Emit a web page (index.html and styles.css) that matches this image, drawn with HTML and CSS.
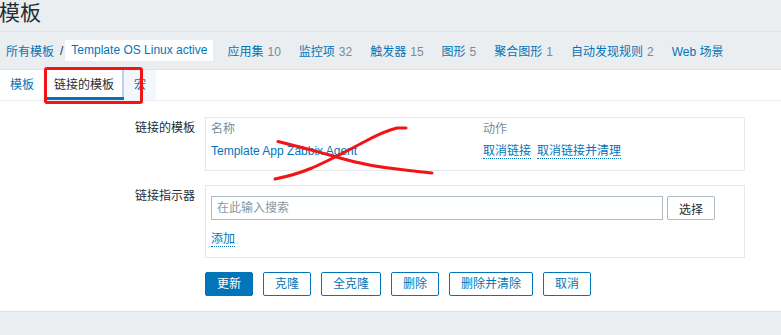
FILE: index.html
```html
<!DOCTYPE html>
<html lang="zh-CN">
<head>
<meta charset="utf-8">
<title>模板</title>
<link rel="stylesheet" href="styles.css">
</head>
<body>
<div class="page">
  <header class="top">
    <h1 class="title">模板</h1>
  </header>
  <nav class="crumbs">
    <a class="crumb-link">所有模板</a><span class="sep">/</span><span class="crumb-current">Template OS Linux active</span>
    <ul class="subnav">
      <li><a class="nav-link">应用集</a><span class="count">10</span></li>
      <li><a class="nav-link">监控项</a><span class="count">32</span></li>
      <li><a class="nav-link">触发器</a><span class="count">15</span></li>
      <li><a class="nav-link">图形</a><span class="count">5</span></li>
      <li><a class="nav-link">聚合图形</a><span class="count">1</span></li>
      <li><a class="nav-link">自动发现规则</a><span class="count">2</span></li>
      <li><a class="nav-link">Web 场景</a></li>
    </ul>
  </nav>
  <main class="content">
    <div class="tabs">
      <a class="tab">模板</a>
      <a class="tab tab-active">链接的模板</a>
      <a class="tab tab-hover">宏</a>
    </div>
    <form class="form">
      <label class="form-label">链接的模板</label>
      <div class="box linked">
        <div class="linked-head">名称</div>
        <div class="linked-head">动作</div>
        <div class="linked-cell"><a class="link">Template App Zabbix Agent</a></div>
        <div class="linked-cell actions"><a class="dotted">取消链接</a><a class="dotted">取消链接并清理</a></div>
      </div>

      <label class="form-label">链接指示器</label>
      <div class="box link-new">
        <div class="search-row">
          <input class="search-input" type="text" placeholder="在此输入搜索">
          <button class="btn-alt" type="button">选择</button>
        </div>
        <div class="add"><a class="dotted">添加</a></div>
      </div>

      <div class="buttons">
        <button class="btn btn-primary" type="button">更新</button>
        <button class="btn" type="button">克隆</button>
        <button class="btn" type="button">全克隆</button>
        <button class="btn" type="button">删除</button>
        <button class="btn" type="button">删除并清除</button>
        <button class="btn" type="button">取消</button>
      </div>
    </form>
  </main>
  <footer class="footer"></footer>

  <div class="annot-rect"></div>
  <svg class="annot-x" width="781" height="335" viewBox="0 0 781 335">
    <path d="M278 141.5 C 300 147, 320 152, 340 158 C 360 164, 385 168, 405 170 C 418 171.5, 426 172.5, 432 173" />
    <path d="M275 179 C 290 176, 300 173, 312 168 C 330 160, 345 152, 362 143 C 375 136, 388 130, 397 128 L 406 128" />
  </svg>
</div>
</body>
</html>
```

FILE: styles.css
```css
* { box-sizing: border-box; }

body {
  margin: 0;
  font: 12px "Liberation Sans", "Noto Sans CJK SC", sans-serif;
  color: #1f2c33;
  background: #fff;
}

.page {
  position: relative;
  height: 335px;
  overflow: hidden;
  display: flex;
  flex-direction: column;
}

.top {
  height: 32px;
  flex: none;
  background: #ebeef0;
  border-bottom: 1px solid #dfe4e7;
}

.title {
  margin: 0 0 0 -1px;
  font-size: 21px;
  font-weight: normal;
  line-height: 26px;
  color: #1f2c33;
}

.crumbs {
  height: 38px;
  flex: none;
  display: flex;
  align-items: center;
  padding-left: 6px;
  background: #ebeef0;
  border-bottom: 1px solid #dfe4e7;
}

.crumb-link { color: #0275b8; }

.sep {
  margin: 0 2px 0 6px;
  color: #1f2c33;
}

.crumb-current {
  height: 21px;
  line-height: 21px;
  padding: 0 6px;
  background: #fff;
  color: #0275b8;
}

.subnav {
  display: flex;
  gap: 18px;
  margin: 0 0 0 14px;
  padding: 0;
  list-style: none;
}

.nav-link { color: #0275b8; }

.count {
  margin-left: 4px;
  color: #768d99;
}

.content {
  flex: none;
  height: 241px;
}

.tabs {
  display: flex;
  height: 31px;
  border-bottom: 1px solid #ebeef0;
}

.tab {
  padding: 0 10px;
  line-height: 30px;
  color: #0275b8;
}

.tab-active {
  color: #1f2c33;
  box-shadow: inset 0 -3px 0 #0275b8, inset -2px 0 0 #b9d2ee;
}

.tab-hover {
  background: #f3f6fa;
}

.form {
  display: grid;
  grid-template-columns: 195px 540px;
  column-gap: 10px;
  row-gap: 14px;
  padding-top: 16px;
  margin: 0;
}

.form-label {
  text-align: right;
  line-height: 23px;
}

.box {
  border: 1px solid #e6e9ec;
}

.linked {
  display: grid;
  grid-template-columns: 272px auto;
  padding: 0 5px 7px;
}

.linked-head {
  line-height: 22px;
  color: #768d99;
}

.linked-cell {
  line-height: 23px;
}

.actions {
  display: flex;
  gap: 6px;
  align-items: center;
}

.link { color: #0275b8; }

.dotted {
  color: #0275b8;
  border-bottom: 1px dotted #0275b8;
  line-height: 14px;
}

.link-new {
  padding: 10px 5px 9px;
}

.search-row {
  display: flex;
  gap: 4px;
  height: 24px;
}

.search-input {
  width: 452px;
  height: 24px;
  margin: 0;
  padding: 0 5px;
  border: 1px solid #acbbc4;
  font: inherit;
  color: #1f2c33;
}

.search-input::placeholder { color: #8a969d; }

.btn-alt {
  width: 48px;
  height: 24px;
  padding: 0;
  border: 1px solid #acbbc4;
  border-radius: 2px;
  background: #fff;
  color: #1f2c33;
  font: inherit;
}

.add {
  margin-top: 10px;
  line-height: 18px;
}

.buttons {
  grid-column: 2;
  display: flex;
  gap: 10px;
}

.btn {
  height: 24px;
  padding: 0 11px;
  border: 1px solid #0275b8;
  border-radius: 2px;
  background: #fff;
  color: #0275b8;
  font: inherit;
  line-height: 22px;
}

.btn-primary {
  background: #0275b8;
  color: #fff;
}

.footer {
  flex: 1;
  background: #ebeef0;
  border-top: 1px solid #dde2e6;
}

.annot-rect {
  position: absolute;
  left: 44px;
  top: 67px;
  width: 99px;
  height: 37px;
  border: 3px solid #f21414;
  border-radius: 3px;
}

.annot-x {
  position: absolute;
  left: 0;
  top: 0;
  pointer-events: none;
}

.annot-x path {
  fill: none;
  stroke: #f21414;
  stroke-width: 3;
  stroke-linecap: round;
  stroke-linejoin: round;
}
```
